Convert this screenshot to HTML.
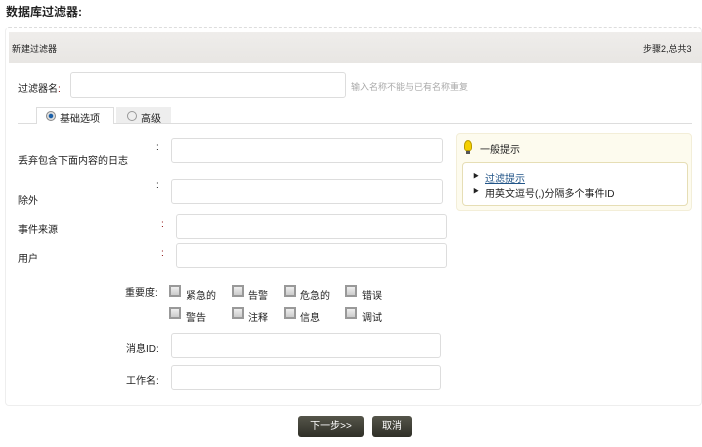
<!DOCTYPE html>
<html><head><meta charset="utf-8"><style>
*{margin:0;padding:0;box-sizing:border-box}
body{width:702px;height:447px;background:#fff;position:relative;overflow:hidden;font-family:"Liberation Sans","Noto Sans CJK SC",sans-serif;font-size:10px;color:#222}
.a{position:absolute;white-space:nowrap}
.in{position:absolute;border:1px solid #ddd;border-radius:3px;background:#fff}
.cb{position:absolute;width:12px;height:12px;border:2px solid #999;background:linear-gradient(#eee,#ccc)}
.btn{position:absolute;height:21px;border-radius:3px;background:linear-gradient(#55554a,#2f2f27);color:#fff;font-size:10px;text-align:center;line-height:21px}
.col{color:#800}
</style></head><body>
<div class="a" style="left:6px;top:3px;font-size:12px;font-weight:bold;color:#222">数据库过滤器:</div>
<div class="a" style="left:5px;top:27px;width:697px;height:379px;border:1px solid #eee;border-top:1px dashed #ddd;border-radius:4px"></div>
<div class="a" style="left:9px;top:32px;width:693px;height:31px;background:linear-gradient(#efedeb,#e8e6e3)"></div>
<div class="a" style="left:12px;top:42px;font-size:9px">新建过滤器</div>
<div class="a" style="left:643px;top:42px;font-size:9px">步骤2,总共3</div>
<div class="a" style="left:18px;top:80px">过滤器名<span class="col">:</span></div>
<div class="in" style="left:70px;top:72px;width:276px;height:26px"></div>
<div class="a" style="left:351px;top:80px;color:#aaa;font-size:9px">输入名称不能与已有名称重复</div>
<div class="a" style="left:18px;top:123px;width:674px;height:1px;background:#ddd"></div>
<div class="a" style="left:36px;top:107px;width:78px;height:17px;border:1px solid #ddd;border-bottom:none;background:#fff"></div>
<div class="a" style="left:116px;top:107px;width:55px;height:16px;background:#eee"></div>
<div class="a" style="left:46px;top:111px;width:10px;height:10px;border-radius:50%;border:1px solid #888;background:radial-gradient(#1a5fa8 35%,#ddd 45%)"></div>
<div class="a" style="left:60px;top:110px">基础选项</div>
<div class="a" style="left:127px;top:111px;width:10px;height:10px;border-radius:50%;border:1px solid #999;background:#eee"></div>
<div class="a" style="left:141px;top:110px">高级</div>

<div class="a" style="left:18px;top:152px">丢弃包含下面内容的日志</div>
<div class="a" style="left:156px;top:142px">:</div>
<div class="in" style="left:171px;top:138px;width:272px;height:25px"></div>
<div class="a" style="left:18px;top:192px">除外</div>
<div class="a" style="left:156px;top:180px">:</div>
<div class="in" style="left:171px;top:179px;width:272px;height:25px"></div>
<div class="a" style="left:18px;top:221px">事件来源</div>
<div class="a col" style="left:161px;top:219px">:</div>
<div class="in" style="left:176px;top:214px;width:271px;height:25px"></div>
<div class="a" style="left:18px;top:250px">用户</div>
<div class="a col" style="left:161px;top:248px">:</div>
<div class="in" style="left:176px;top:243px;width:271px;height:25px"></div>

<div class="a" style="left:125px;top:284px">重要度:</div>
<div class="cb" style="left:169px;top:285px"></div><div class="a" style="left:186px;top:287px">紧急的</div>
<div class="cb" style="left:232px;top:285px"></div><div class="a" style="left:248px;top:287px">告警</div>
<div class="cb" style="left:284px;top:285px"></div><div class="a" style="left:300px;top:287px">危急的</div>
<div class="cb" style="left:345px;top:285px"></div><div class="a" style="left:362px;top:287px">错误</div>
<div class="cb" style="left:169px;top:307px"></div><div class="a" style="left:186px;top:309px">警告</div>
<div class="cb" style="left:232px;top:307px"></div><div class="a" style="left:248px;top:309px">注释</div>
<div class="cb" style="left:284px;top:307px"></div><div class="a" style="left:300px;top:309px">信息</div>
<div class="cb" style="left:345px;top:307px"></div><div class="a" style="left:362px;top:309px">调试</div>

<div class="a" style="left:126px;top:340px">消息ID:</div>
<div class="in" style="left:171px;top:333px;width:270px;height:25px"></div>
<div class="a" style="left:126px;top:372px">工作名:</div>
<div class="in" style="left:171px;top:365px;width:270px;height:25px"></div>

<div class="a" style="left:456px;top:133px;width:236px;height:78px;background:#fdfbee;border:1px solid #f3eed8;border-radius:4px"></div>
<div class="a" style="left:464px;top:140px;width:8px;height:11px;background:#f5d000;border-radius:50% 50% 30% 30%;border:1px solid #b89a00"></div>
<div class="a" style="left:466px;top:151px;width:4px;height:3px;background:#555"></div>
<div class="a" style="left:480px;top:141px">一般提示</div>
<div class="a" style="left:462px;top:162px;width:226px;height:44px;background:#fff;border:1px solid #e6deb5;border-radius:4px"></div>
<div class="a" style="left:473px;top:171px;font-size:6px">▶</div>
<div class="a" style="left:485px;top:170px;color:#225588;text-decoration:underline">过滤提示</div>
<div class="a" style="left:473px;top:186px;font-size:6px">▶</div>
<div class="a" style="left:485px;top:185px">用英文逗号(,)分隔多个事件ID</div>

<div class="btn" style="left:298px;top:416px;width:66px">下一步&gt;&gt;</div>
<div class="btn" style="left:372px;top:416px;width:40px">取消</div>
</body></html>
